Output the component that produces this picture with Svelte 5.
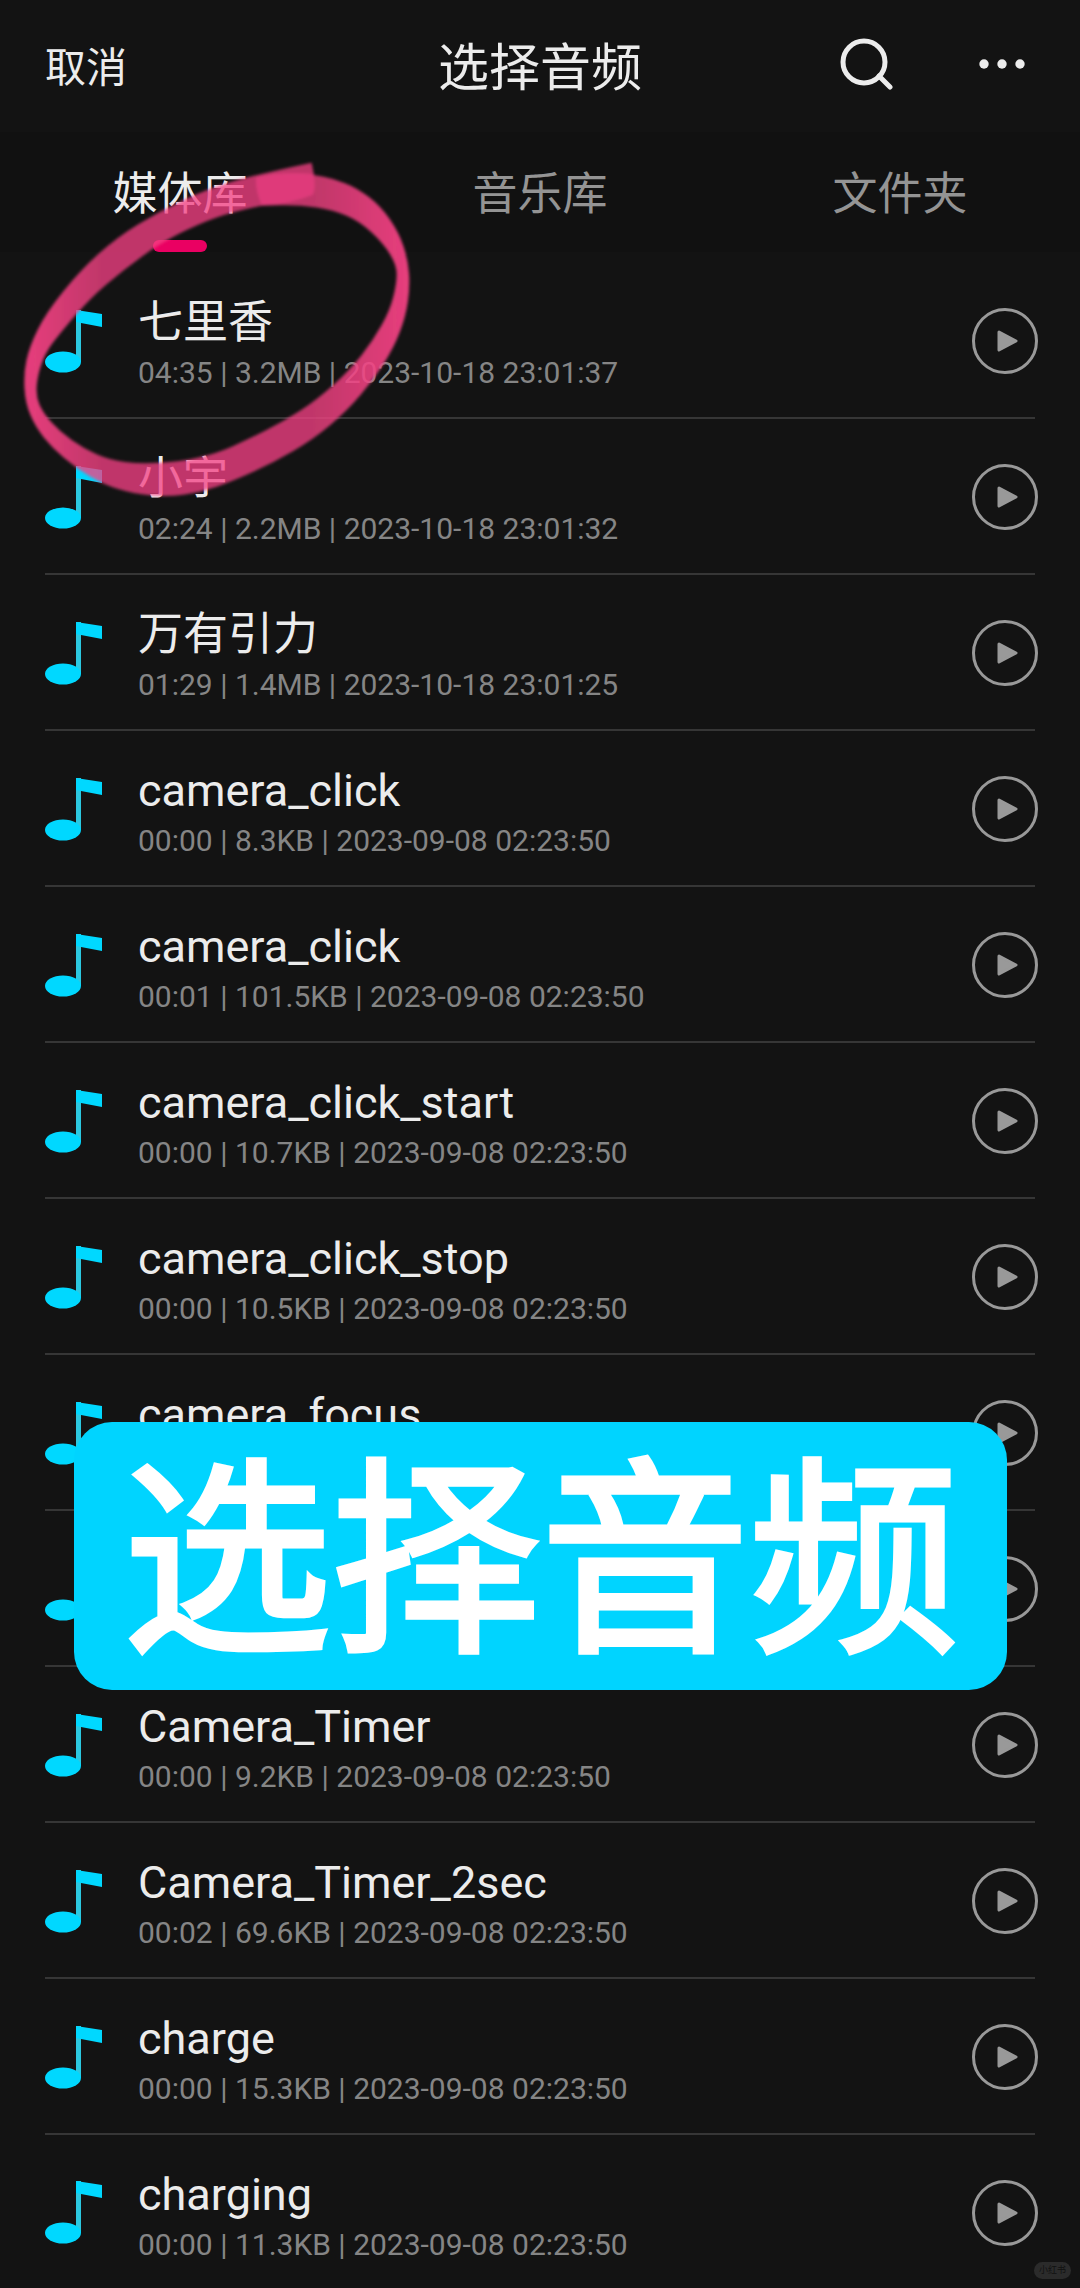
<script lang="ts">
	type Track = { name: string; meta: string };
	type Point = [number, number];

	const tabs = ['媒体库', '音乐库', '文件夹'];

	const tracks: Track[] = [
		{ name: '七里香', meta: '04:35 | 3.2MB | 2023-10-18 23:01:37' },
		{ name: '小宇', meta: '02:24 | 2.2MB | 2023-10-18 23:01:32' },
		{ name: '万有引力', meta: '01:29 | 1.4MB | 2023-10-18 23:01:25' },
		{ name: 'camera_click', meta: '00:00 | 8.3KB | 2023-09-08 02:23:50' },
		{ name: 'camera_click', meta: '00:01 | 101.5KB | 2023-09-08 02:23:50' },
		{ name: 'camera_click_start', meta: '00:00 | 10.7KB | 2023-09-08 02:23:50' },
		{ name: 'camera_click_stop', meta: '00:00 | 10.5KB | 2023-09-08 02:23:50' },
		{ name: 'camera_focus', meta: '' },
		{ name: '', meta: '' },
		{ name: 'Camera_Timer', meta: '00:00 | 9.2KB | 2023-09-08 02:23:50' },
		{ name: 'Camera_Timer_2sec', meta: '00:02 | 69.6KB | 2023-09-08 02:23:50' },
		{ name: 'charge', meta: '00:00 | 15.3KB | 2023-09-08 02:23:50' },
		{ name: 'charging', meta: '00:00 | 11.3KB | 2023-09-08 02:23:50' }
	];

	// edges of the marker stroke
	const outer: Point[] = [
		[935, 68], [770, 103], [620, 148], [480, 213], [350, 292], [240, 392], [138, 518], [88, 620],
		[71, 700], [76, 790], [107, 862], [157, 924], [228, 984], [310, 1033], [400, 1061], [500, 1071],
		[600, 1058], [700, 1023], [820, 968], [940, 898], [1042, 812], [1122, 717], [1182, 622],
		[1217, 530], [1230, 440], [1224, 360], [1197, 278], [1142, 198], [1070, 143], [1000, 116], [942, 105]
	];
	const inner: Point[] = [
		[785, 197], [700, 215], [600, 250], [480, 310], [370, 390], [270, 475], [180, 580], [135, 640],
		[112, 710], [108, 770], [130, 820], [180, 875], [250, 925], [330, 960], [420, 972], [540, 965],
		[650, 940], [740, 900], [850, 845], [950, 780], [1050, 690], [1120, 600], [1170, 510],
		[1190, 430], [1190, 375], [1150, 310], [1080, 245], [1000, 210], [900, 195], [785, 197]
	];

	function smooth(points: Point[]): string {
		let d = `M${points[0]}`;
		for (let i = 1; i < points.length - 1; i++) {
			const [x, y] = points[i];
			const [nx, ny] = points[i + 1];
			d += ` Q${x} ${y} ${(x + nx) / 2} ${(y + ny) / 2}`;
		}
		return `${d} L${points[points.length - 1]} Z`;
	}

	let activeTab = $state(0);
</script>

<div class="page">
	<header>
		<button class="cancel">取消</button>
		<h1>选择音频</h1>
		<div class="actions">
			<button aria-label="搜索">
				<svg width="54" height="54" viewBox="0 0 54 54" fill="none" stroke="#ececec">
					<circle cx="25" cy="25" r="21" stroke-width="5" />
					<path d="M40 39L51 50" stroke-width="5" stroke-linecap="round" />
				</svg>
			</button>
			<button aria-label="更多">
				<svg width="46" height="10" viewBox="0 0 46 10" fill="#ececec">
					<circle cx="5" cy="5" r="4.7" />
					<circle cx="23" cy="5" r="4.7" />
					<circle cx="41" cy="5" r="4.7" />
				</svg>
			</button>
		</div>
	</header>

	<nav>
		{#each tabs as tab, i}
			<button class:active={activeTab === i} onclick={() => (activeTab = i)}>{tab}</button>
		{/each}
	</nav>

	<ul>
		{#each tracks as track}
			<li>
				<svg class="note" width="57" height="63" viewBox="0 0 57 63">
					<path d="M31 0H36V52H31Z" fill="#2cc8e0" />
					<path d="M31 0L57 4V17L36 13L31 12Z" fill="#00d8ff" />
					<ellipse cx="18" cy="52" rx="18" ry="10.5" fill="#00d8ff" />
				</svg>
				<div class="info">
					<p class="name">{track.name}</p>
					<p class="meta">{track.meta}</p>
				</div>
				<button class="play" aria-label="播放">
					<svg width="66" height="66" viewBox="0 0 66 66">
						<circle cx="33" cy="33" r="31.5" fill="none" stroke="#999" stroke-width="3" />
						<path d="M27 24L44 33L27 42Z" fill="#999" stroke="#999" stroke-width="3" stroke-linejoin="round" />
					</svg>
				</button>
			</li>
		{/each}
	</ul>

	<svg class="marker" viewBox="0 0 1320 1200" width="440" height="400" aria-hidden="true">
		<defs>
			<linearGradient id="ink" gradientUnits="userSpaceOnUse" x1="73" y1="0" x2="1227" y2="0">
				<stop offset="0" stop-color="#f44183" stop-opacity="0.94" />
				<stop offset="0.2" stop-color="#f44183" stop-opacity="0.77" />
				<stop offset="0.75" stop-color="#f44183" stop-opacity="0.77" />
				<stop offset="1" stop-color="#f44183" stop-opacity="0.94" />
			</linearGradient>
			<filter id="soft"><feGaussianBlur stdDeviation="4" /></filter>
		</defs>
		<g filter="url(#soft)">
			<path d={`${smooth(outer)} ${smooth(inner)}`} fill="url(#ink)" fill-rule="evenodd" />
			<path d="M768 112Q850 92 940 102Q950 140 938 165Q860 195 785 196Q765 150 768 112Z" fill="#e63c7e" fill-opacity="0.8" />
		</g>
	</svg>

	<div class="caption">选择音频</div>
	<span class="watermark">小红书</span>
</div>

<style>
	:global(body) {
		background: #131313;
	}

	.page {
		position: relative;
		min-height: 100vh;
		overflow: hidden;
		background: #131313;
		color: #ececec;
		font-family: Roboto, 'Noto Sans CJK SC', sans-serif;
	}

	button {
		padding: 0;
		border: none;
		background: none;
		color: inherit;
		font: inherit;
		cursor: pointer;
	}

	svg {
		display: block;
	}

	header {
		display: grid;
		grid-template-columns: 1fr auto 1fr;
		align-items: center;
		height: 132px;
		padding: 0 45px 5px;
		box-sizing: border-box;
	}

	.cancel {
		justify-self: start;
		font-size: 41px;
	}

	h1 {
		margin: 0;
		font-size: 51px;
		font-weight: 400;
	}

	.actions {
		display: flex;
		justify-content: flex-end;
		align-items: center;
		gap: 86px;
		padding-right: 10px;
	}

	nav {
		display: flex;
		height: 120px;
		background: #111;
	}

	nav button {
		position: relative;
		flex: 1;
		padding-bottom: 4px;
		color: #949494;
		font-size: 45px;
	}

	nav .active {
		color: #ececec;
	}

	nav .active::after {
		content: '';
		position: absolute;
		bottom: 0;
		left: 50%;
		width: 54px;
		height: 12px;
		margin-left: -27px;
		border-radius: 6px;
		background: #ea0062;
	}

	ul {
		margin: 0;
		padding: 11px 45px 0;
		list-style: none;
	}

	li {
		display: flex;
		align-items: center;
		height: 156px;
		padding-top: 2px;
		border-bottom: 2px solid #363636;
		box-sizing: border-box;
	}

	li:last-child {
		height: 153px;
		border-bottom: none;
	}

	.info {
		flex: 1;
		margin-left: 36px;
		padding-top: 8px;
	}

	p {
		margin: 0;
	}

	.name {
		height: 56px;
		font-size: 45px;
		line-height: 56px;
	}

	.meta {
		height: 44px;
		color: #858585;
		font-size: 30px;
		line-height: 44px;
	}

	.play {
		margin-right: -3px;
	}

	.marker {
		position: absolute;
		top: 140px;
		left: 0;
		pointer-events: none;
	}

	.caption {
		position: absolute;
		top: 1422px;
		right: 73px;
		left: 74px;
		padding-bottom: 24px;
		border-radius: 38px;
		background: #00d4ff;
		color: #fff;
		font-family: 'Noto Sans CJK SC', sans-serif;
		font-size: 209px;
		line-height: 244px;
		text-align: center;
		-webkit-text-stroke: 5px #fff;
	}

	.watermark {
		position: absolute;
		right: 9px;
		bottom: 9px;
		padding: 0 5px;
		border-radius: 9px;
		background: #2b2b2b;
		color: #111;
		font-size: 9px;
		line-height: 17px;
	}
</style>
